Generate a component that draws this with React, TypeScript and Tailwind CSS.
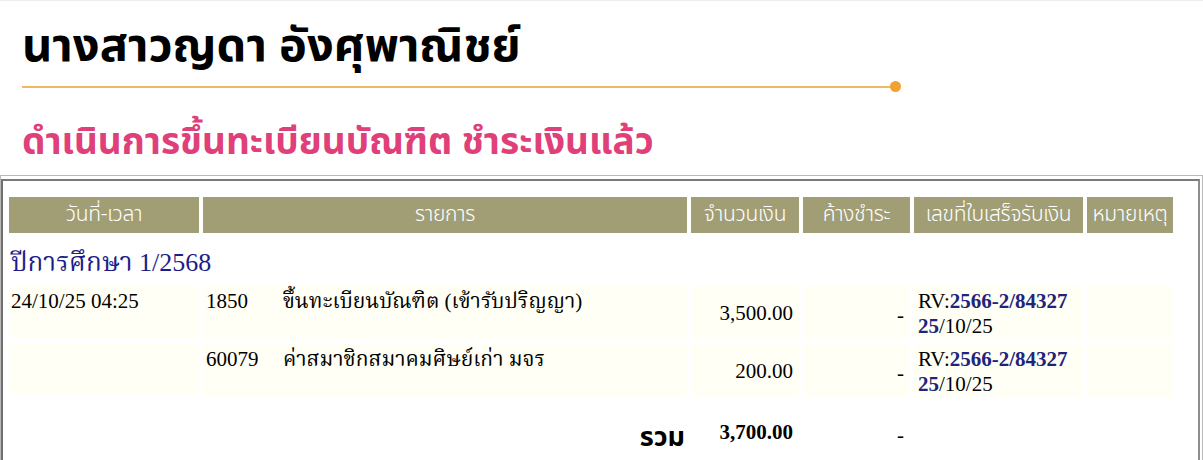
import React from 'react'

const thaiSans = 'font-["Noto_Sans_Thai","Tahoma","Noto_Sans",sans-serif]'
const thaiSerif = 'font-["Liberation_Serif","Noto_Serif_Thai","Noto_Sans_Thai",serif]'

type Row = {
  date: string
  code: string
  title: string
  amount: string
}

const rows: Row[] = [
  { date: '24/10/25 04:25', code: '1850', title: 'ขึ้นทะเบียนบัณฑิต (เข้ารับปริญญา)', amount: '3,500.00' },
  { date: '', code: '60079', title: 'ค่าสมาชิกสมาคมศิษย์เก่า มจร', amount: '200.00' },
]

function HeadCell({ children, span }: { children: React.ReactNode; span?: boolean }) {
  return (
    <div
      className={`${span ? 'col-span-2' : ''} h-[36px] flex items-center justify-center bg-[#a19e76] text-white text-[21px] font-light tracking-[-0.3px] whitespace-nowrap overflow-hidden ${thaiSans}`}
    >
      {children}
    </div>
  )
}

function Receipt() {
  return (
    <div className="leading-[25px] text-[21px] text-black pt-[4px] whitespace-nowrap">
      <div>
        RV:<span className="font-bold text-[#22237a]">2566-2/84327</span>
      </div>
      <div>
        <span className="font-bold text-[#22237a]">25</span>/10/25
      </div>
    </div>
  )
}

export default function App() {
  return (
    <div className={`w-[1203px] h-[460px] bg-white overflow-hidden border-t border-[#ececec] ${thaiSerif}`}>
      {/* Header */}
      <div className="pl-[22px] pt-[14px]">
        <h1 className={`text-[47px] leading-[64px] font-bold text-black whitespace-nowrap ${thaiSans}`}>นางสาวญดา อังศุพาณิชย์</h1>
        <div className="flex items-center w-[879px] mt-[2px]">
          <div className="flex-1 h-[2px] bg-[#efb863]" />
          <div className="w-[11px] h-[11px] rounded-full bg-[#f0a133] -ml-[2px]" />
        </div>
        <h2 className={`mt-[27px] text-[37px] leading-[48px] font-bold text-[#e0407a] whitespace-nowrap ${thaiSans}`}>
          ดำเนินการขึ้นทะเบียนบัณฑิต ชำระเงินแล้ว
        </h2>
      </div>

      {/* Table box */}
      <div className="mt-[8px] border border-[#b9b9b9] pt-[3px] pr-[2px] h-[300px]">
        <div className="h-full border-t-2 border-l-2 border-r-2 border-t-[#7a7a7a] border-l-[#6f6f6f] border-r-[#8d8d8d] pt-[16px] pl-[6px]">
          <div className="grid grid-cols-[190px_80px_400px_108px_107px_169px_86px] gap-[4px]">
            <HeadCell>วันที่-เวลา</HeadCell>
            <HeadCell span>รายการ</HeadCell>
            <HeadCell>จำนวนเงิน</HeadCell>
            <HeadCell>ค้างชำระ</HeadCell>
            <HeadCell>เลขที่ใบเสร็จรับเงิน</HeadCell>
            <HeadCell>หมายเหตุ</HeadCell>

            <div className="col-span-7 h-[44px] pt-[8px] text-[26px] leading-[36px] text-[#1d1d86] pl-[2px]">ปีการศึกษา 1/2568</div>

            {rows.map((r) => (
              <React.Fragment key={r.code}>
                <div className="h-[52px] bg-[#fffff6] text-[21px] leading-[25px] pt-[4px] pl-[2px] text-black whitespace-nowrap">{r.date}</div>
                <div className="bg-[#fffff6] text-[21px] leading-[25px] pt-[4px] pl-[3px] text-black">{r.code}</div>
                <div className="bg-[#fffff6] text-[21px] leading-[25px] pt-[4px] -ml-[4px] pl-[0px] text-black whitespace-nowrap">{r.title}</div>
                <div className="bg-[#fffff6] text-[21px] flex items-center justify-end pr-[6px] pt-[4px] text-black">{r.amount}</div>
                <div className="bg-[#fffff6] text-[21px] flex items-center justify-end pr-[6px] pt-[8px] text-black">-</div>
                <div className="bg-[#fffff6] pl-[4px]">
                  <Receipt />
                </div>
                <div className="bg-[#fffff6]" />
              </React.Fragment>
            ))}

            <div className="col-span-3 flex justify-end items-start pt-[20px] pr-[2px]">
              <span className={`text-[27px] leading-[34px] font-bold text-black ${thaiSans}`}>รวม</span>
            </div>
            <div className="flex justify-end pr-[6px] pt-[19px] text-[21px] font-bold leading-[25px] text-black">3,700.00</div>
            <div className="flex justify-end pr-[6px] pt-[22px] text-[21px] leading-[25px] text-black">-</div>
            <div />
            <div />
          </div>
        </div>
      </div>
    </div>
  )
}
